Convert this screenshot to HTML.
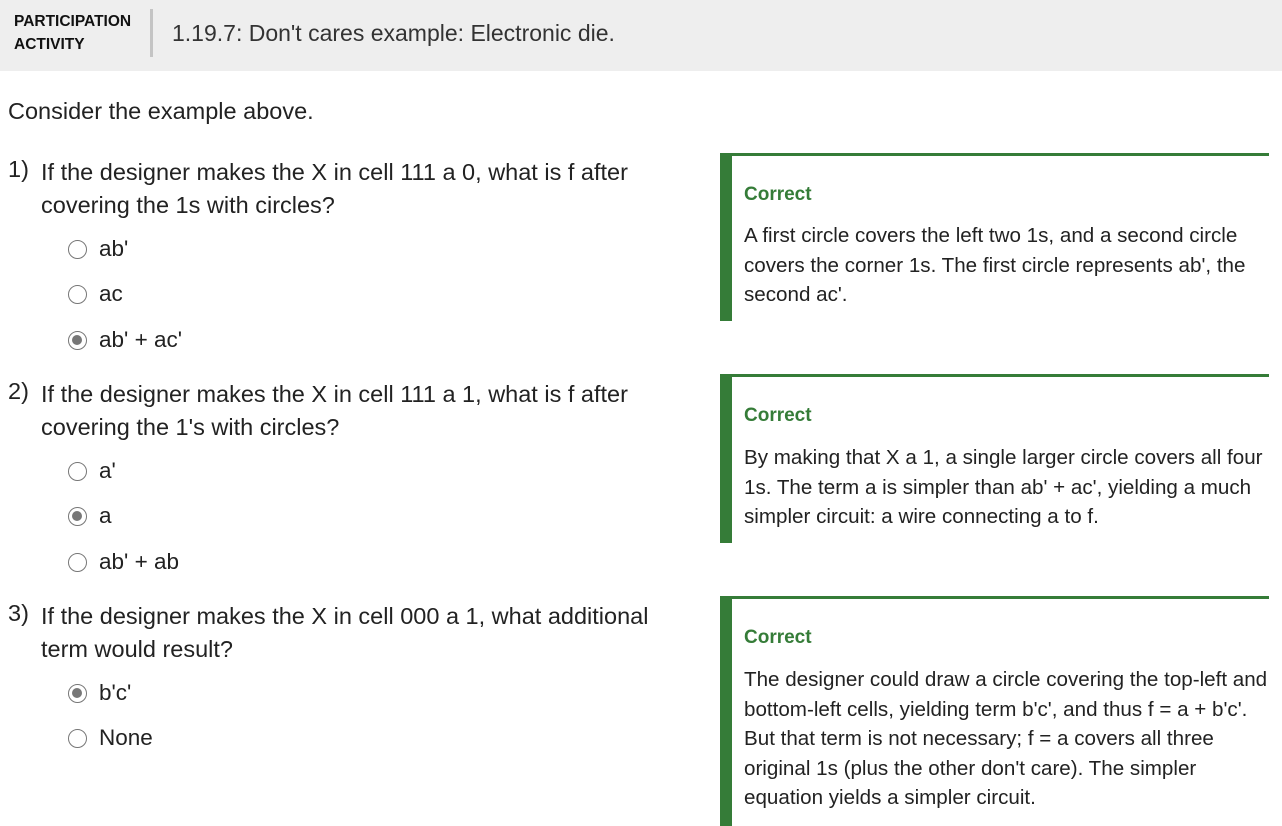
<!DOCTYPE html>
<html><head><meta charset="utf-8"><style>
*{margin:0;padding:0;box-sizing:border-box}
body{width:1282px;height:824px;background:#fff;font-family:"Liberation Sans",sans-serif;color:#222;position:relative;overflow:hidden}
.a{position:absolute;white-space:nowrap}
.hdr{position:absolute;left:0;top:0;width:1282px;height:71px;background:#eeeeee}
.q{font-size:23.5px;color:#222}
.opt{font-size:22.5px}
.r{position:absolute;width:19px;height:19px;border:1.5px solid #777;border-radius:50%;background:#fff}
.r.on::after{content:"";position:absolute;left:3px;top:3px;width:10px;height:10px;border-radius:50%;background:#777}
.box{position:absolute;left:720px;width:549px;border-top:3px solid #357c38;border-left:12px solid #357c38}
.c{font-size:19px;font-weight:bold;color:#357c38}
.t{font-size:20.6px;color:#222;line-height:29.5px}
</style></head><body>
<div class="hdr"></div>
<div class="a" style="left:14px;top:10px;font-size:15.5px;font-weight:bold;line-height:23px;color:#111">PARTICIPATION<br>ACTIVITY</div>
<div class="a" style="left:150px;top:9px;width:3px;height:48px;background:#c4c4c4"></div>
<div class="a" style="left:172px;top:20px;font-size:23px;color:#333">1.19.7: Don't cares example: Electronic die.</div>
<div class="a q" style="left:8px;top:98px">Consider the example above.</div>

<div class="a q" style="left:8px;top:156px">1)</div>
<div class="a q" style="left:41px;top:156px;line-height:33px">If the designer makes the X in cell 111 a 0, what is f after<br>covering the 1s with circles?</div>
<div class="r" style="left:68px;top:240px"></div><div class="a opt" style="left:99px;top:236px">ab'</div>
<div class="r" style="left:68px;top:285px"></div><div class="a opt" style="left:99px;top:281px">ac</div>
<div class="r on" style="left:68px;top:331px"></div><div class="a opt" style="left:99px;top:327px">ab' + ac'</div>

<div class="a q" style="left:8px;top:378px">2)</div>
<div class="a q" style="left:41px;top:378px;line-height:33px">If the designer makes the X in cell 111 a 1, what is f after<br>covering the 1's with circles?</div>
<div class="r" style="left:68px;top:462px"></div><div class="a opt" style="left:99px;top:458px">a'</div>
<div class="r on" style="left:68px;top:507px"></div><div class="a opt" style="left:99px;top:503px">a</div>
<div class="r" style="left:68px;top:553px"></div><div class="a opt" style="left:99px;top:549px">ab' + ab</div>

<div class="a q" style="left:8px;top:600px">3)</div>
<div class="a q" style="left:41px;top:600px;line-height:33px">If the designer makes the X in cell 000 a 1, what additional<br>term would result?</div>
<div class="r on" style="left:68px;top:684px"></div><div class="a opt" style="left:99px;top:680px">b'c'</div>
<div class="r" style="left:68px;top:729px"></div><div class="a opt" style="left:99px;top:725px">None</div>

<div class="box" style="top:153px;height:168px"></div>
<div class="a c" style="left:744px;top:184px">Correct</div>
<div class="a t" style="left:744px;top:221px">A first circle covers the left two 1s, and a second circle<br>covers the corner 1s. The first circle represents ab', the<br>second ac'.</div>

<div class="box" style="top:374px;height:169px"></div>
<div class="a c" style="left:744px;top:405px">Correct</div>
<div class="a t" style="left:744px;top:443px">By making that X a 1, a single larger circle covers all four<br>1s. The term a is simpler than ab' + ac', yielding a much<br>simpler circuit: a wire connecting a to f.</div>

<div class="box" style="top:596px;height:230px"></div>
<div class="a c" style="left:744px;top:627px">Correct</div>
<div class="a t" style="left:744px;top:665px">The designer could draw a circle covering the top-left and<br>bottom-left cells, yielding term b'c', and thus f = a + b'c'.<br>But that term is not necessary; f = a covers all three<br>original 1s (plus the other don't care). The simpler<br>equation yields a simpler circuit.</div>
</body></html>
